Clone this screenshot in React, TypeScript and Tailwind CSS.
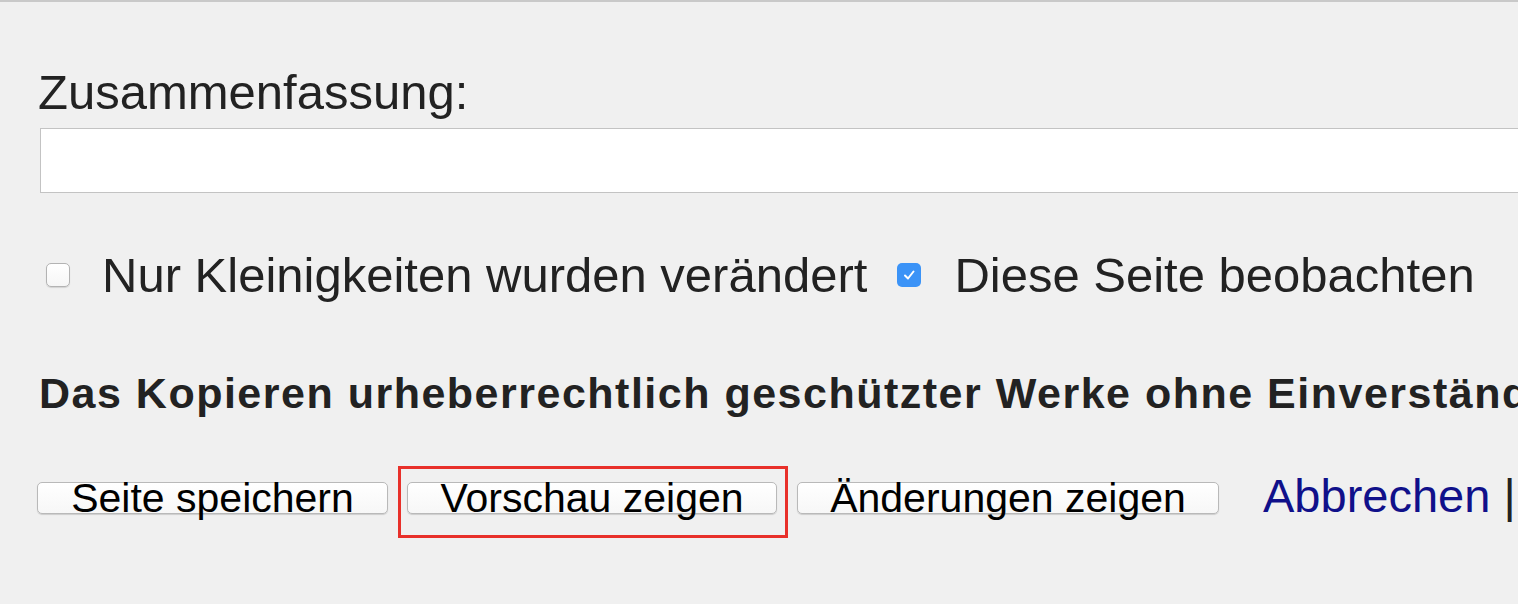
import { useState } from 'react';

export default function App() {
  const [minor, setMinor] = useState(false);
  const [watch, setWatch] = useState(true);

  return (
    <div
      className="h-[604px] w-[1518px] overflow-hidden border-t-2 border-[#c9c9c9] bg-[#f0f0f0] text-[#222]"
      style={{ fontFamily: '"Liberation Sans", Arial, sans-serif' }}
    >
      <div className="pl-[37px]">
        {/* Summary */}
        <label className="mt-[62px] ml-[1px] block text-[49px] leading-[56px]">
          Zusammenfassung:
        </label>
        <input
          type="text"
          className="mt-[8px] ml-[3px] block h-[65px] w-[1500px] border border-[#c3c3c3] bg-white outline-none"
        />

        {/* Options */}
        <div className="mt-[54px] flex items-center whitespace-nowrap text-[49px] leading-[56px]">
          <button
            type="button"
            onClick={() => setMinor(!minor)}
            className="ml-[9px] h-[24px] w-[24px] shrink-0 rounded-[5px] border border-[#b3b3b3] bg-gradient-to-b from-white to-[#f6f6f6] shadow-[0_1px_1px_rgba(0,0,0,0.12)]"
            aria-label="Nur Kleinigkeiten wurden verändert"
          />
          <span className="ml-[32px] shrink-0">Nur Kleinigkeiten wurden verändert</span>
          <button
            type="button"
            onClick={() => setWatch(!watch)}
            className={
              watch
                ? 'ml-[30px] flex h-[24px] w-[24px] shrink-0 items-center justify-center rounded-[5px] bg-[#3b93f7]'
                : 'ml-[30px] h-[24px] w-[24px] shrink-0 rounded-[5px] border border-[#b3b3b3] bg-white'
            }
            aria-label="Diese Seite beobachten"
          >
            {watch && (
              <svg width="14" height="14" viewBox="0 0 14 14" fill="none">
                <path d="M3 7.5 L6 10.5 L11.5 3.5" stroke="white" strokeWidth="2" strokeLinecap="round" strokeLinejoin="round" />
              </svg>
            )}
          </button>
          <span className="ml-[33px] shrink-0">Diese Seite beobachten</span>
        </div>

        {/* Copyright notice */}
        <p className="mt-[65px] ml-[2px] whitespace-nowrap text-[43px] font-bold leading-[50px] tracking-[1.5px]">
          Das Kopieren urheberrechtlich geschützter Werke ohne Einverständnis der Urheber ist nicht erlaubt.
        </p>

        {/* Actions */}
        <div className="mt-[64px] flex items-start whitespace-nowrap">
          <button
            type="button"
            className="h-[32px] w-[351px] shrink-0 rounded-[5px] border border-[#b9b9b9] bg-gradient-to-b from-white to-[#f7f7f7] text-[41px] leading-[30px] text-black shadow-[0_1px_1px_rgba(0,0,0,0.15)]"
          >
            Seite speichern
          </button>
          <div className="relative ml-[19px] shrink-0">
            <button
              type="button"
              className="h-[32px] w-[370px] rounded-[5px] border border-[#b9b9b9] bg-gradient-to-b from-white to-[#f7f7f7] text-[41px] leading-[30px] text-black shadow-[0_1px_1px_rgba(0,0,0,0.15)]"
            >
              Vorschau zeigen
            </button>
            <span className="pointer-events-none absolute -top-[16px] -bottom-[19px] -left-[9px] -right-[11px] border-[3px] border-[#e8302a]" />
          </div>
          <button
            type="button"
            className="ml-[20px] h-[32px] w-[422px] shrink-0 rounded-[5px] border border-[#b9b9b9] bg-gradient-to-b from-white to-[#f7f7f7] text-[41px] leading-[30px] text-black shadow-[0_1px_1px_rgba(0,0,0,0.15)]"
          >
            Änderungen zeigen
          </button>
          <span className="ml-[44px] -mt-[6px] shrink-0 text-[47px] leading-[40px] text-[#10108a]">
            <a href="#" className="text-[#10108a]">Abbrechen</a>
            <span className="text-[#222]"> | </span>
            <a href="#" className="text-[#10108a]">Bearbeitungshilfe</a>
          </span>
        </div>
      </div>
    </div>
  );
}
